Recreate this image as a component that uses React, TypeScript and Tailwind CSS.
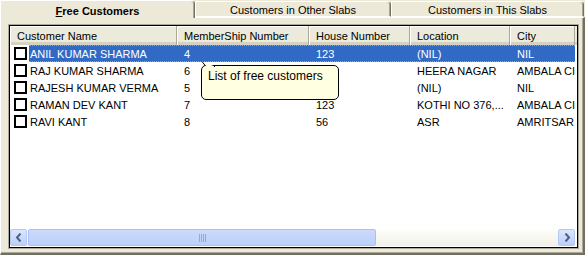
import React from 'react'

type Row = {
  name: string
  member: string
  house: string
  location: string
  city: string
}

const ROWS: Row[] = [
  { name: 'ANIL KUMAR SHARMA', member: '4', house: '123', location: '(NIL)', city: 'NIL' },
  { name: 'RAJ KUMAR SHARMA', member: '6', house: '', location: 'HEERA NAGAR', city: 'AMBALA CITY' },
  { name: 'RAJESH KUMAR VERMA', member: '5', house: '', location: '(NIL)', city: 'NIL' },
  { name: 'RAMAN DEV KANT', member: '7', house: '123', location: 'KOTHI NO 376,...', city: 'AMBALA CITY' },
  { name: 'RAVI KANT', member: '8', house: '56', location: 'ASR', city: 'AMRITSAR' },
]

const COLUMNS = [
  { label: 'Customer Name', width: 'w-[167px]' },
  { label: 'MemberShip Number', width: 'w-[132px]' },
  { label: 'House Number', width: 'w-[101px]' },
  { label: 'Location', width: 'w-[100px]' },
  { label: 'City', width: 'w-[65px]' },
]

function Chevron({ dir }: { dir: 'left' | 'right' }) {
  return (
    <svg width="8" height="9" viewBox="0 0 8 9">
      {dir === 'left' ? (
        <path d="M5.5 0.5 L2 4.5 L5.5 8.5" stroke="#4D6185" strokeWidth="2" fill="none" />
      ) : (
        <path d="M2.5 0.5 L6 4.5 L2.5 8.5" stroke="#4D6185" strokeWidth="2" fill="none" />
      )}
    </svg>
  )
}

function ScrollButton({ dir }: { dir: 'left' | 'right' }) {
  return (
    <div className="w-[17px] h-full shrink-0 flex items-center justify-center rounded-[2px] border border-[#B4C8F6] bg-gradient-to-b from-[#DCE6FD] to-[#BCCEF8]">
      <Chevron dir={dir} />
    </div>
  )
}

function Tab({ label, active, className }: { label: React.ReactNode; active?: boolean; className: string }) {
  return (
    <div
      className={`${className} flex items-center justify-center border-l border-t border-r border-l-white border-t-white border-r-[#716F64] rounded-tr-[4px] bg-[#ECE9D8] shadow-[inset_-1px_0_0_#ACA899] ${
        active ? 'h-[18px] pt-[3px] font-bold relative z-10 -mb-px' : 'h-[16px] pt-[3px] border-b border-b-white'
      }`}
    >
      {label}
    </div>
  )
}

export default function App() {
  return (
    <div
      className="w-[585px] h-[255px] bg-[#ECE9D8] flex flex-col text-[11px] text-black leading-none overflow-hidden"
      style={{ fontFamily: '"Liberation Sans", Arial, sans-serif' }}
    >
      {/* Tabs */}
      <div className="h-[17px] flex items-end shrink-0">
        <Tab
          active
          className="w-[195px]"
          label={
            <span>
              <span className="underline">F</span>ree Customers
            </span>
          }
        />
        <Tab className="w-[196px]" label="Customers in Other Slabs" />
        <Tab className="w-[193px]" label="Customers in This Slabs" />
      </div>

      {/* Panel */}
      <div className="flex-1 border-l border-t border-l-white border-t-white border-r-2 border-b-2 border-r-[#716F64] border-b-[#716F64] shadow-[inset_-1px_-1px_0_#ACA899] pt-[6px] pl-[7px] pr-[4px] pb-[4px] relative">
        <div className="w-[571px] h-[225px] border border-[#ACA899]">
          <div className="w-full h-full border border-black bg-white flex flex-col">
            {/* Header */}
            <div className="h-[19px] flex shrink-0 bg-[#EBEADB] shadow-[inset_0_-3px_0_#D6D2C2]">
              {COLUMNS.map((c) => (
                <div
                  key={c.label}
                  className={`${c.width} h-full shrink-0 flex items-center pl-[7px] pt-[2px] border-r border-r-[#ACA899] shadow-[inset_1px_1px_0_#FFFFFF] whitespace-nowrap overflow-hidden`}
                >
                  {c.label}
                </div>
              ))}
            </div>

            {/* Rows */}
            <div className="flex-1 flex flex-col">
              {ROWS.map((r, i) => {
                const selected = i === 0
                return (
                  <div key={r.name} className="h-[17px] flex shrink-0">
                    <div className="w-[19px] shrink-0 flex items-center pl-[4px]">
                      <div className="w-[13px] h-[13px] border-2 border-black bg-white" />
                    </div>
                    <div
                      className={`flex h-full items-center pt-[2px] whitespace-nowrap ${
                        selected
                          ? 'bg-[#316AC5] text-white border-y border-dotted border-[#D99A3C]'
                          : 'border-y border-transparent'
                      }`}
                    >
                      <div className="w-[148px] pl-[1px] overflow-hidden">{r.name}</div>
                      <div className="w-[132px] pl-[7px] overflow-hidden">{r.member}</div>
                      <div className="w-[101px] pl-[7px] overflow-hidden">{r.house}</div>
                      <div className="w-[100px] pl-[7px] overflow-hidden">{r.location}</div>
                      <div className="w-[65px] pl-[7px] overflow-hidden">{r.city}</div>
                    </div>
                  </div>
                )
              })}
            </div>

            {/* Horizontal scrollbar */}
            <div className="h-[17px] shrink-0 flex bg-gradient-to-b from-[#FEFEFB] to-[#F1EFE6] mb-px">
              <ScrollButton dir="left" />
              <div className="w-[348px] h-full ml-[1px] shrink-0 rounded-[2px] border border-[#A9C1F6] bg-gradient-to-b from-[#CCDAFD] to-[#BAD0FB] flex items-center justify-center">
                <div className="flex gap-[1px] h-[8px]">
                  <div className="w-[1px] h-full bg-[#8EAAEF]" />
                  <div className="w-[1px] h-full bg-[#8EAAEF]" />
                  <div className="w-[1px] h-full bg-[#8EAAEF]" />
                  <div className="w-[1px] h-full bg-[#8EAAEF]" />
                </div>
              </div>
              <div className="flex-1" />
              <ScrollButton dir="right" />
              <div className="w-[2px] shrink-0 bg-white" />
            </div>
          </div>
        </div>

        {/* Tooltip */}
        <div className="absolute left-[200px] top-[47px] w-[138px] h-[35px] bg-[#FFFFE1] border border-black rounded-[5px] pl-[6px] pt-[3px] text-[12px] leading-[14px]">
          List of free customers
        </div>
        <svg className="absolute left-[200px] top-[43px]" width="16" height="6" viewBox="0 0 16 6">
          <path d="M1 0.5 L5 5.5 L14 5.5" fill="#FFFFE1" stroke="#000" strokeWidth="1" />
          <path d="M4 5 L13 5 L13 6.5 L4 6.5 Z" fill="#FFFFE1" />
        </svg>
      </div>
    </div>
  )
}
